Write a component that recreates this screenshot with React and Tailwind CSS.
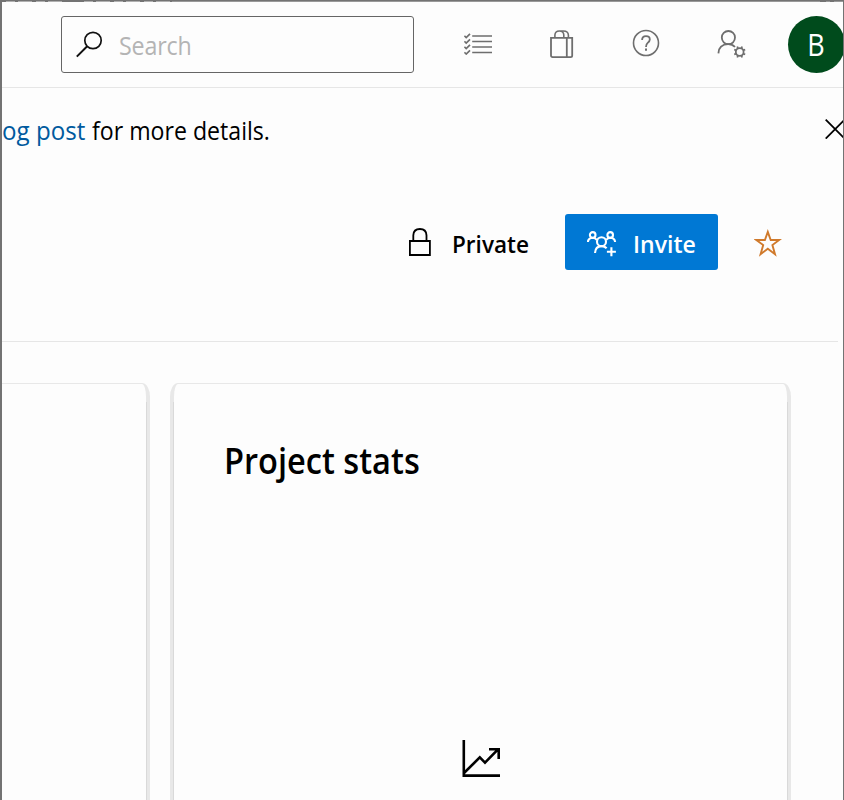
function SearchIcon() {
  return (
    <svg width="28" height="28" viewBox="0 0 28 28" fill="none" stroke="#111" strokeWidth="1.7">
      <circle cx="17" cy="9.5" r="8.2" />
      <path d="M11.2 15.3 L0.8 25.6" strokeWidth="2" />
    </svg>
  );
}

function ChecklistIcon() {
  const rows = [3, 8.5, 14, 19.5];
  return (
    <svg width="28" height="22" viewBox="0 0 28 22" fill="none" stroke="#6e6e6e" strokeWidth="1.7">
      {rows.map((y) => (
        <path key={y} d={`M0.4 ${y - 0.2} L2.2 ${y + 1.5} L6 ${y - 2.2} M8.2 ${y} H28`} />
      ))}
    </svg>
  );
}

function BagIcon() {
  return (
    <svg width="24" height="30" viewBox="0 0 24 30" fill="none" stroke="#6e6e6e" strokeWidth="1.8">
      <path d="M1 8.9 H22.2 V26.5 Q22.2 28.1 20.6 28.1 H2.6 Q1 28.1 1 26.5 Z M16.8 8.9 V28" />
      <path d="M4.9 8.9 V6 Q5.2 2 9.3 2 Q13.6 2 13.8 6 V8.9 M9.3 2 H13.5 Q18.1 2 18.4 6 V8.9" strokeWidth="1.6" />
    </svg>
  );
}

function HelpIcon() {
  return (
    <svg width="28" height="28" viewBox="0 0 28 28" fill="none" stroke="#6e6e6e" strokeWidth="1.6">
      <circle cx="14" cy="14" r="12.5" />
      <path d="M10.1 11.1 Q10.1 7.2 14 7.2 Q17.8 7.2 17.8 10.5 Q17.8 12.3 15.7 13.9 Q14 15.3 14 17.9" strokeWidth="1.8" />
      <path d="M14 19.6 V21.8" strokeWidth="2" />
    </svg>
  );
}

function UserGearIcon() {
  return (
    <svg width="30" height="30" viewBox="0 0 30 30" fill="none" stroke="#6e6e6e" strokeWidth="1.8">
      <circle cx="11.4" cy="7.6" r="6.6" />
      <path d="M1.4 23.4 Q1.8 14.4 11.2 14.2 Q15.4 14.2 18 17" />
      <circle cx="22.7" cy="22" r="3.9" />
      <path
        d="M20.9 18.6 L20.3 16.5 M24.5 18.6 L25.1 16.5 M20.9 25.4 L20.3 27.5 M24.5 25.4 L25.1 27.5 M19.3 20.3 L17.2 19.6 M19.3 23.7 L17.2 24.4 M26.1 20.3 L28.2 19.6 M26.1 23.7 L28.2 24.4"
        strokeWidth="1.7"
      />
    </svg>
  );
}

function CloseIcon() {
  return (
    <svg width="20" height="20" viewBox="0 0 20 20" fill="none" stroke="#000" strokeWidth="1.8">
      <path d="M0.7 0.7 L19.6 19.6 M19.6 0.7 L0.7 19.6" />
    </svg>
  );
}

function LockIcon() {
  return (
    <svg width="22" height="28" viewBox="0 0 22 28" fill="none" stroke="#000" strokeWidth="1.8">
      <path d="M0.9 13 H20.9 V27 H0.9 Z M4.3 13 V7.4 Q4.5 1 10.9 1 Q17.3 1 17.5 7.4 V13" />
    </svg>
  );
}

function InviteIcon() {
  return (
    <svg width="30" height="26" viewBox="0 0 30 26" fill="none" stroke="#fff" strokeWidth="2.1">
      <circle cx="5.7" cy="3.9" r="2.8" />
      <circle cx="23.2" cy="3.9" r="2.8" />
      <circle cx="14.5" cy="10.7" r="4.5" />
      <path d="M0.9 11 Q1.2 6.9 5.6 6.7 Q8.5 6.7 9.9 9 M28.1 11 Q27.8 6.9 23.4 6.7 Q20.5 6.7 19.1 9" />
      <path d="M8 22 Q8.4 15.2 14.5 15.1 Q17.7 15.1 19.6 17.2 M24.4 16.3 V25.2 M19.9 20.7 H28.9" />
    </svg>
  );
}

function StarIcon() {
  return (
    <svg width="28" height="28" viewBox="0 0 28 28" fill="none" stroke="#d07a2c" strokeWidth="1.9">
      <path d="M13.8 2.9 L16.7 11 H25.2 L18.4 16.1 L21 25.2 L13.8 19.8 L6.6 25.2 L9.2 16.1 L2.4 11 H10.9 Z" />
    </svg>
  );
}

function ChartIcon() {
  return (
    <svg width="38" height="38" viewBox="0 0 38 38" fill="none" stroke="#000" strokeWidth="2.6">
      <path d="M1.8 0 V35.6 H38" />
      <path d="M2 33 L17.8 17.4 L23 22.6 L36 9.4 M27 9.2 H36.7 V19" />
    </svg>
  );
}

export default function App() {
  return (
    <div className="flex h-[800px] w-[844px] flex-col overflow-hidden border-r border-l-2 border-[#737373] bg-[#fdfdfd] font-['Open_Sans','Noto_Sans',sans-serif] text-black">
      <svg className="shrink-0 bg-[#737373]" width="842" height="2" fill="none">
        <path d="M4 1.5 H62 M82 1.5 H170" stroke="#b0b0b0" strokeDasharray="9 3 14 4" />
        <path d="M170 1.5 H818 M824 1.5 H828 M832 1.5 H842" stroke="#999" />
      </svg>

      <header className="flex h-[86px] shrink-0 items-start border-b border-[#e6e6e6]">
        <div className="mt-[14px] ml-[59px] flex h-[57px] w-[353px] shrink-0 items-center rounded-[3px] border border-[#666] pl-[14px]">
          <SearchIcon />
          <span className="ml-[15px] inline-block origin-left scale-x-[0.93] pt-[3px] text-[25px] tracking-[-0.2px] text-[#b4b4b4]">
            Search
          </span>
        </div>
        <div className="mt-[31px] ml-[50px] shrink-0"><ChecklistIcon /></div>
        <div className="mt-[27px] ml-[58px] shrink-0"><BagIcon /></div>
        <div className="mt-[27px] ml-[58px] shrink-0"><HelpIcon /></div>
        <div className="mt-[28px] ml-[57px] shrink-0"><UserGearIcon /></div>
        <div className="mt-[14px] ml-[41px] flex size-[57px] shrink-0 items-center justify-center rounded-full bg-[#004b1c] text-[31px] text-white">
          <span className="inline-block scale-x-[0.87]">B</span>
        </div>
      </header>

      <div className="flex h-[87px] shrink-0 items-center">
        <p className="mb-0.5 flex w-[823px] shrink-0 text-[25px] whitespace-nowrap">
          <span className="inline-block w-[90px] origin-left scale-x-[0.965] text-[#005a9e]">og post</span>
          <span className="inline-block origin-left scale-x-[0.925]">for more details.</span>
        </p>
        <div className="mb-1.5 shrink-0"><CloseIcon /></div>
      </div>

      <div className="mr-[5px] flex h-[167px] shrink-0 items-start border-b border-[#e6e6e6] pt-[39px] pl-[407px]">
        <div className="flex h-14 w-[156px] shrink-0 items-center">
          <LockIcon />
          <span className="ml-[21px] inline-block origin-left scale-x-[0.94] pt-1 text-[24px] font-semibold">Private</span>
        </div>
        <button className="flex h-14 w-[153px] shrink-0 items-center rounded-[3px] bg-[#0078d4] pl-[22px] text-white">
          <span className="mt-[3px] shrink-0"><InviteIcon /></span>
          <span className="ml-[16px] inline-block origin-left scale-x-[0.96] pt-1 text-[24px] font-semibold">Invite</span>
        </button>
        <div className="mt-[15px] ml-9 shrink-0"><StarIcon /></div>
      </div>

      <main className="flex min-h-0 flex-1 gap-5 pt-[41px]">
        <section className="h-[440px] w-[148px] shrink-0 rounded-tr-[8px_14px] border-t border-r-4 border-[#e8e8e8]">
          <div className="-mr-px h-full pt-[18px]">
            <div className="h-full border-r border-[#d9d9d9]" />
          </div>
        </section>
        <section className="h-[440px] w-[621px] shrink-0 rounded-t-[8px_14px] border-x-4 border-t border-[#e8e8e8]">
          <div className="-mx-px h-full pt-[18px]">
            <div className="h-full border-x border-[#d9d9d9] pt-[35px]">
              <h2 className="ml-[50px] text-[36px] leading-[48px] font-semibold">
                <span className="inline-block origin-left scale-x-[0.905]">Project stats</span>
              </h2>
              <div className="mt-[255px] ml-[288px]"><ChartIcon /></div>
            </div>
          </div>
        </section>
      </main>
    </div>
  );
}
